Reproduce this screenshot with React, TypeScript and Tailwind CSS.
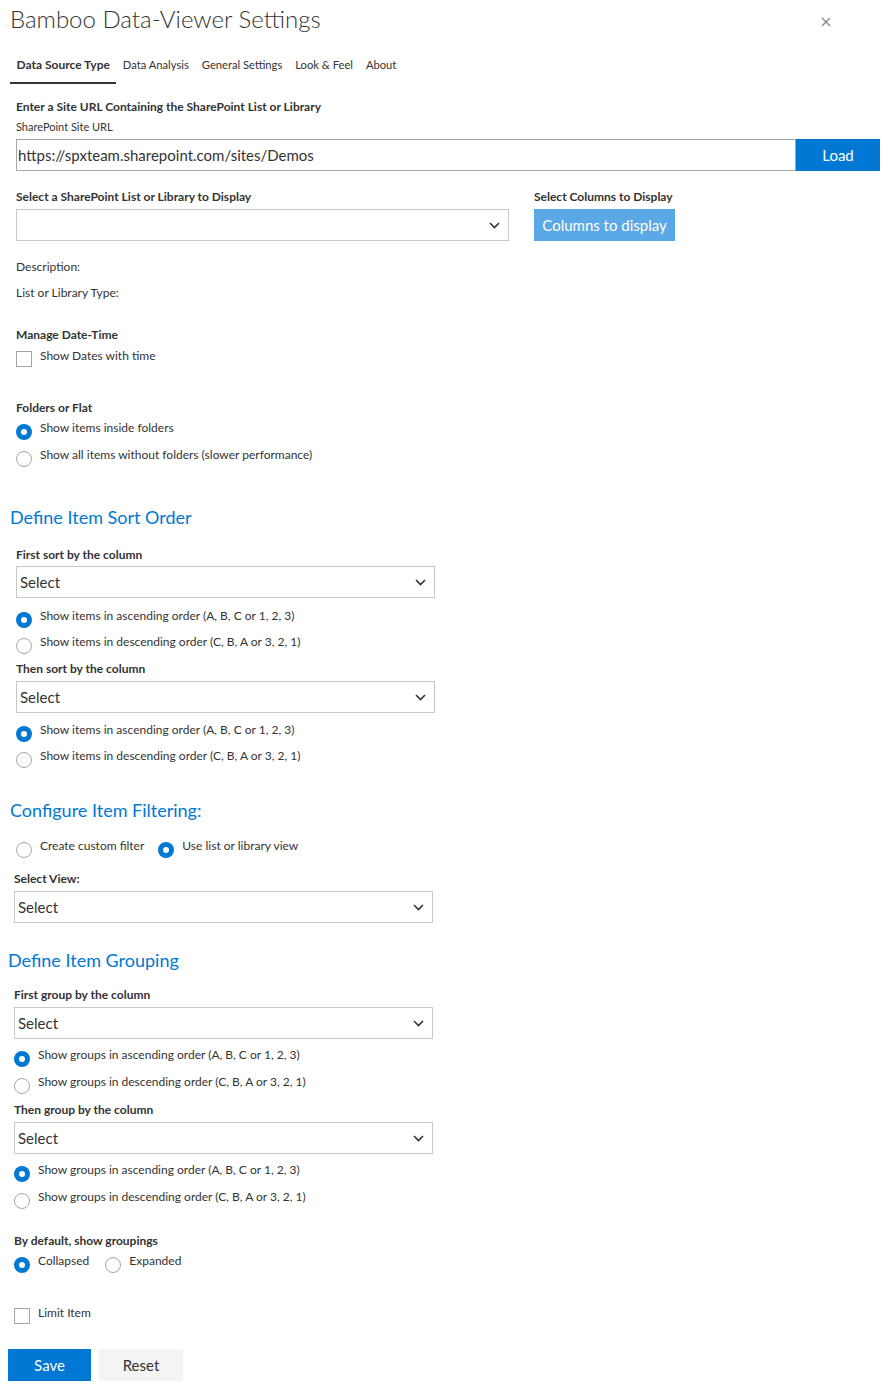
import React from "react";

const FONT = { fontFamily: 'Lato, "Open Sans", sans-serif' };

function Chevron() {
  return (
    <svg width="11" height="7" viewBox="0 0 11 7" fill="none">
      <path d="M1 1l4.5 4.5L10 1" stroke="#333" strokeWidth="1.6" />
    </svg>
  );
}

function Radio({ checked, label }: { checked?: boolean; label: string }) {
  return (
    <div className="flex items-start">
      {checked ? (
        <span className="mt-1 flex h-4 w-4 shrink-0 items-center justify-center rounded-full bg-[#0078d4]">
          <span className="h-[6px] w-[6px] rounded-full bg-white" />
        </span>
      ) : (
        <span className="mt-1 h-4 w-4 shrink-0 rounded-full border border-[#a6a6a6] bg-white" />
      )}
      <span className="ml-2 text-[12px] leading-4 text-[#333]">{label}</span>
    </div>
  );
}

function Checkbox({ label }: { label: string }) {
  return (
    <div className="flex items-start">
      <span className="mt-[3px] h-4 w-4 shrink-0 border border-[#a6a6a6] bg-white" />
      <span className="ml-2 text-[12px] leading-4 text-[#333]">{label}</span>
    </div>
  );
}

function Select({ value, className }: { value?: string; className: string }) {
  return (
    <div className={`flex h-8 items-center justify-between border border-[#c8c8c8] bg-white pl-[3px] pr-[8px] ${className}`}>
      <span className="text-[15px] text-[#333]">{value}</span>
      <Chevron />
    </div>
  );
}

function Label({ children, className = "" }: { children: React.ReactNode; className?: string }) {
  return <div className={`text-[12px] font-bold leading-4 text-[#333] ${className}`}>{children}</div>;
}

function Heading({ children, className = "" }: { children: React.ReactNode; className?: string }) {
  return <h2 className={`text-[18px] leading-6 text-[#0078d4] ${className}`}>{children}</h2>;
}

export default function App() {
  const tabs = ["Data Source Type", "Data Analysis", "General Settings", "Look & Feel", "About"];

  return (
    <div className="min-h-[1390px] w-[891px] bg-white text-[#333]" style={FONT}>
      {/* Header */}
      <div className="flex items-start justify-between pr-[60px]">
        <h1 className="pl-[10px] pt-[2px] text-[24px] font-light leading-[34px] text-[#333]">Bamboo Data-Viewer Settings</h1>
        <svg className="mt-[17px]" width="10" height="10" viewBox="0 0 10 10">
          <path d="M1 1l8 8M9 1l-8 8" stroke="#888" strokeWidth="1.3" />
        </svg>
      </div>

      {/* Tabs */}
      <div className="mt-[12px] flex pl-[10px]">
        {tabs.map((t, i) => (
          <div
            key={t}
            className={`flex h-9 items-center px-[6.5px] ${
              i === 0 ? "border-b-2 border-[#333] text-[12px] font-bold" : "border-b-2 border-transparent text-[11.2px]"
            }`}
          >
            {t}
          </div>
        ))}
      </div>

      {/* Data source */}
      <div className="pl-4 pr-[11px]">
        <Label className="mt-[15px]">Enter a Site URL Containing the SharePoint List or Library</Label>
        <div className="mt-1 text-[11px] leading-4">SharePoint Site URL</div>
        <div className="mt-1 flex h-8">
          <div className="flex flex-1 items-center border border-[#a6a6a6] pl-[1px] text-[15px]">
            https://spxteam.sharepoint.com/sites/Demos
          </div>
          <button className="w-[84px] bg-[#0078d4] text-[15px] text-white">Load</button>
        </div>

        <div className="mt-[18px] flex">
          <div className="w-[493px]">
            <Label>Select a SharePoint List or Library to Display</Label>
            <Select className="mt-1 w-[493px]" />
          </div>
          <div className="ml-[25px]">
            <Label>Select Columns to Display</Label>
            <button className="mt-1 h-8 w-[141px] bg-[#5ba8e6] text-[15px] text-white">Columns to display</button>
          </div>
        </div>

        <div className="mt-[18px] text-[12px] leading-4">Description:</div>
        <div className="mt-[10px] text-[12px] leading-4">List or Library Type:</div>

        <Label className="mt-[26px]">Manage Date-Time</Label>
        <div className="mt-[5px]">
          <Checkbox label="Show Dates with time" />
        </div>

        <Label className="mt-[33px]">Folders or Flat</Label>
        <div className="mt-1">
          <Radio checked label="Show items inside folders" />
        </div>
        <div className="mt-[7px]">
          <Radio label="Show all items without folders (slower performance)" />
        </div>
      </div>

      {/* Sort order */}
      <div className="pl-4">
        <Heading className="-ml-[6px] mt-[38px]">Define Item Sort Order</Heading>
        <Label className="mt-[18px]">First sort by the column</Label>
        <Select value="Select" className="mt-[3px] w-[419px]" />
        <div className="mt-[10px]">
          <Radio checked label="Show items in ascending order (A, B, C or 1, 2, 3)" />
        </div>
        <div className="mt-[6px]">
          <Radio label="Show items in descending order (C, B, A or 3, 2, 1)" />
        </div>
        <Label className="mt-[7px]">Then sort by the column</Label>
        <Select value="Select" className="mt-1 w-[419px]" />
        <div className="mt-[9px]">
          <Radio checked label="Show items in ascending order (A, B, C or 1, 2, 3)" />
        </div>
        <div className="mt-[6px]">
          <Radio label="Show items in descending order (C, B, A or 3, 2, 1)" />
        </div>

        <Heading className="-ml-[6px] mt-[30px]">Configure Item Filtering:</Heading>
        <div className="mt-4 flex gap-[14px]">
          <Radio label="Create custom filter" />
          <Radio checked label="Use list or library view" />
        </div>
      </div>

      {/* Filtering view + grouping */}
      <div className="pl-[14px]">
        <Label className="mt-[13px]">Select View:</Label>
        <Select value="Select" className="mt-1 w-[419px]" />

        <Heading className="-ml-[6px] mt-[25px]">Define Item Grouping</Heading>
        <Label className="mt-[15px]">First group by the column</Label>
        <Select value="Select" className="mt-1 w-[419px]" />
        <div className="mt-2">
          <Radio checked label="Show groups in ascending order (A, B, C or 1, 2, 3)" />
        </div>
        <div className="mt-[7px]">
          <Radio label="Show groups in descending order (C, B, A or 3, 2, 1)" />
        </div>
        <Label className="mt-2">Then group by the column</Label>
        <Select value="Select" className="mt-1 w-[419px]" />
        <div className="mt-2">
          <Radio checked label="Show groups in ascending order (A, B, C or 1, 2, 3)" />
        </div>
        <div className="mt-[7px]">
          <Radio label="Show groups in descending order (C, B, A or 3, 2, 1)" />
        </div>

        <Label className="mt-6">By default, show groupings</Label>
        <div className="mt-1 flex gap-[16px]">
          <Radio checked label="Collapsed" />
          <Radio label="Expanded" />
        </div>

        <div className="mt-8">
          <Checkbox label="Limit Item" />
        </div>
      </div>

      <div className="mt-[25px] flex gap-2 pl-2">
        <button className="h-8 w-[83px] bg-[#0078d4] text-[15px] text-white">Save</button>
        <button className="h-8 w-[84px] bg-[#f4f4f4] text-[15px] text-[#333]">Reset</button>
      </div>
    </div>
  );
}
